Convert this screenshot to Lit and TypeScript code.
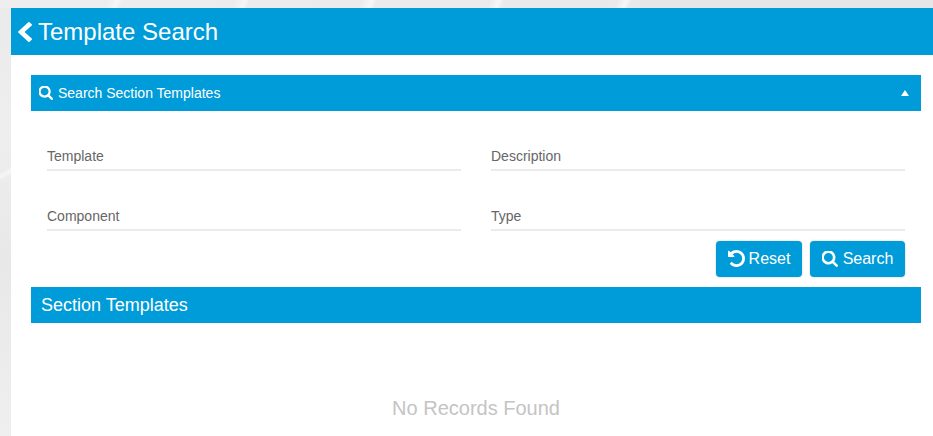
import { LitElement, html, css, svg } from "lit";
import { customElement } from "lit/decorators.js";

const SEARCH = svg`<path d="M1216 832q0-185-131.500-316.500t-316.500-131.500-316.500 131.500-131.500 316.500 131.500 316.500 316.500 131.500 316.500-131.500 131.500-316.500zm512 832q0 52-38 90t-90 38q-54 0-90-38l-343-342q-179 124-399 124-143 0-273.500-55.500t-225-150-150-225-55.500-273.500 55.500-273.500 150-225 225-150 273.500-55.500 273.500 55.500 225 150 150 225 55.500 273.500q0 220-124 399l343 343q37 37 37 90z"/>`;
const CHEVRON = svg`<path d="M1427 301l-531 531 531 531q19 19 19 45t-19 45l-166 166q-19 19-45 19t-45-19l-742-742q-19-19-19-45t19-45l742-742q19-19 45-19t45 19l166 166q19 19 19 45t-19 45z"/>`;
const UNDO = svg`<path d="M1664 896q0 156-61 298t-164 245-245 164-298 61q-172 0-327-72.500t-264-204.500q-7-10-6.500-22.500t8.500-20.500l137-138q10-9 25-9 16 2 23 12 73 95 179 147t225 52q104 0 198.500-40.500t163.500-109.500 109.500-163.500 40.500-198.500-40.500-198.500-109.500-163.500-163.500-109.500-198.500-40.500q-98 0-188 35.500t-160 101.500l137 138q31 30 14 69-17 40-59 40h-448q-26 0-45-19t-19-45v-448q0-42 40-59 39-17 69 14l130 129q107-101 244.500-156.500t284.500-55.500q156 0 298 61t245 164 164 245 61 298z"/>`;

const VB_SEARCH = "128 192 1600 1600";
const VB_UNDO = "128 128 1536 1536";
const VB_CHEVRON = "410 26 1036 1612";

@customElement("app-root")
export class AppRoot extends LitElement {
  static styles = css`
    :host {
      display: block;
      height: 436px;
      overflow: hidden;
      box-sizing: border-box;
      padding: 8px 0 0 11px;
      font-family: "Liberation Sans", Arial, sans-serif;
      background-color: #e6e6e6;
      background-image:
        repeating-linear-gradient(112deg, transparent 0 100px, #f2f2f2 106px, #f7f7f7 109px, transparent 114px 118px),
        linear-gradient(90deg, #eeeeee, #e9e9e9),
        linear-gradient(152deg, transparent 0 39%, #f6f6f6 40%, transparent 41% 100%),
        linear-gradient(30deg, #efefef, #e8e8e8 40%, #eeeeee 70%, #eaeaea);
      background-size:
        640px 8px,
        640px 8px,
        11px 436px,
        11px 436px;
      background-repeat: no-repeat;
    }
    .panel {
      background: #fff;
      height: 428px;
    }
    svg {
      fill: currentColor;
      display: block;
      flex: none;
    }
    .title {
      display: flex;
      align-items: center;
      height: 47px;
      padding-left: 7px;
      gap: 6px;
      background: #009bd9;
      color: #fff;
      font-size: 24px;
    }
    .title svg {
      width: 14px;
      height: 20px;
    }
    .body {
      padding: 20px 12px 0 20px;
    }
    .bar {
      display: flex;
      align-items: center;
      height: 36px;
      background: #009bd9;
      color: #fff;
    }
    .filter {
      padding: 0 12px 0 8px;
      gap: 5px;
      font-size: 14px;
    }
    .filter svg {
      width: 14px;
      height: 14px;
    }
    .filter span {
      flex: 1;
    }
    .caret {
      width: 0;
      height: 0;
      border-left: 4.5px solid transparent;
      border-right: 4.5px solid transparent;
      border-bottom: 6px solid #fff;
    }
    .fields {
      display: grid;
      grid-template-columns: 414px 414px;
      column-gap: 30px;
      padding: 0 0 0 16px;
    }
    .field {
      box-sizing: border-box;
      height: 60px;
      padding-top: 37px;
      border-bottom: 2px solid #ebebeb;
      font-size: 14px;
      line-height: 16px;
      color: #666;
    }
    .actions {
      display: flex;
      justify-content: flex-end;
      gap: 8px;
      margin: 10px 16px 10px 0;
    }
    .btn {
      display: flex;
      align-items: center;
      justify-content: center;
      box-sizing: border-box;
      height: 36px;
      border: none;
      border-radius: 4px;
      background: #009bd9;
      color: #fff;
      font: 16px "Liberation Sans", Arial, sans-serif;
      padding: 0;
      box-shadow: 0 0 2px rgba(0, 0, 0, 0.25);
    }
    .reset {
      width: 86px;
      gap: 4px;
    }
    .reset svg {
      width: 17px;
      height: 17px;
      margin-top: -2px;
    }
    .search {
      width: 95px;
      gap: 5px;
    }
    .search svg {
      width: 16px;
      height: 16px;
      margin-top: -1px;
    }
    .results {
      padding-left: 10px;
      font-size: 18px;
    }
    .empty {
      padding-top: 74px;
      text-align: center;
      font-size: 20px;
      line-height: 23px;
      color: #c4c4c4;
    }
  `;

  private icon(p: unknown, viewBox: string) {
    return html`<svg viewBox=${viewBox} preserveAspectRatio="none" aria-hidden="true">${p}</svg>`;
  }

  render() {
    return html`
      <div class="panel">
        <div class="title">${this.icon(CHEVRON, VB_CHEVRON)}<span>Template Search</span></div>
        <div class="body">
          <div class="bar filter">
            ${this.icon(SEARCH, VB_SEARCH)}<span>Search Section Templates</span><i class="caret"></i>
          </div>
          <div class="fields">
            <div class="field">Template</div>
            <div class="field">Description</div>
            <div class="field">Component</div>
            <div class="field">Type</div>
          </div>
          <div class="actions">
            <button class="btn reset">${this.icon(UNDO, VB_UNDO)}Reset</button>
            <button class="btn search">${this.icon(SEARCH, VB_SEARCH)}Search</button>
          </div>
          <div class="bar results">Section Templates</div>
          <div class="empty">No Records Found</div>
        </div>
      </div>
    `;
  }
}
